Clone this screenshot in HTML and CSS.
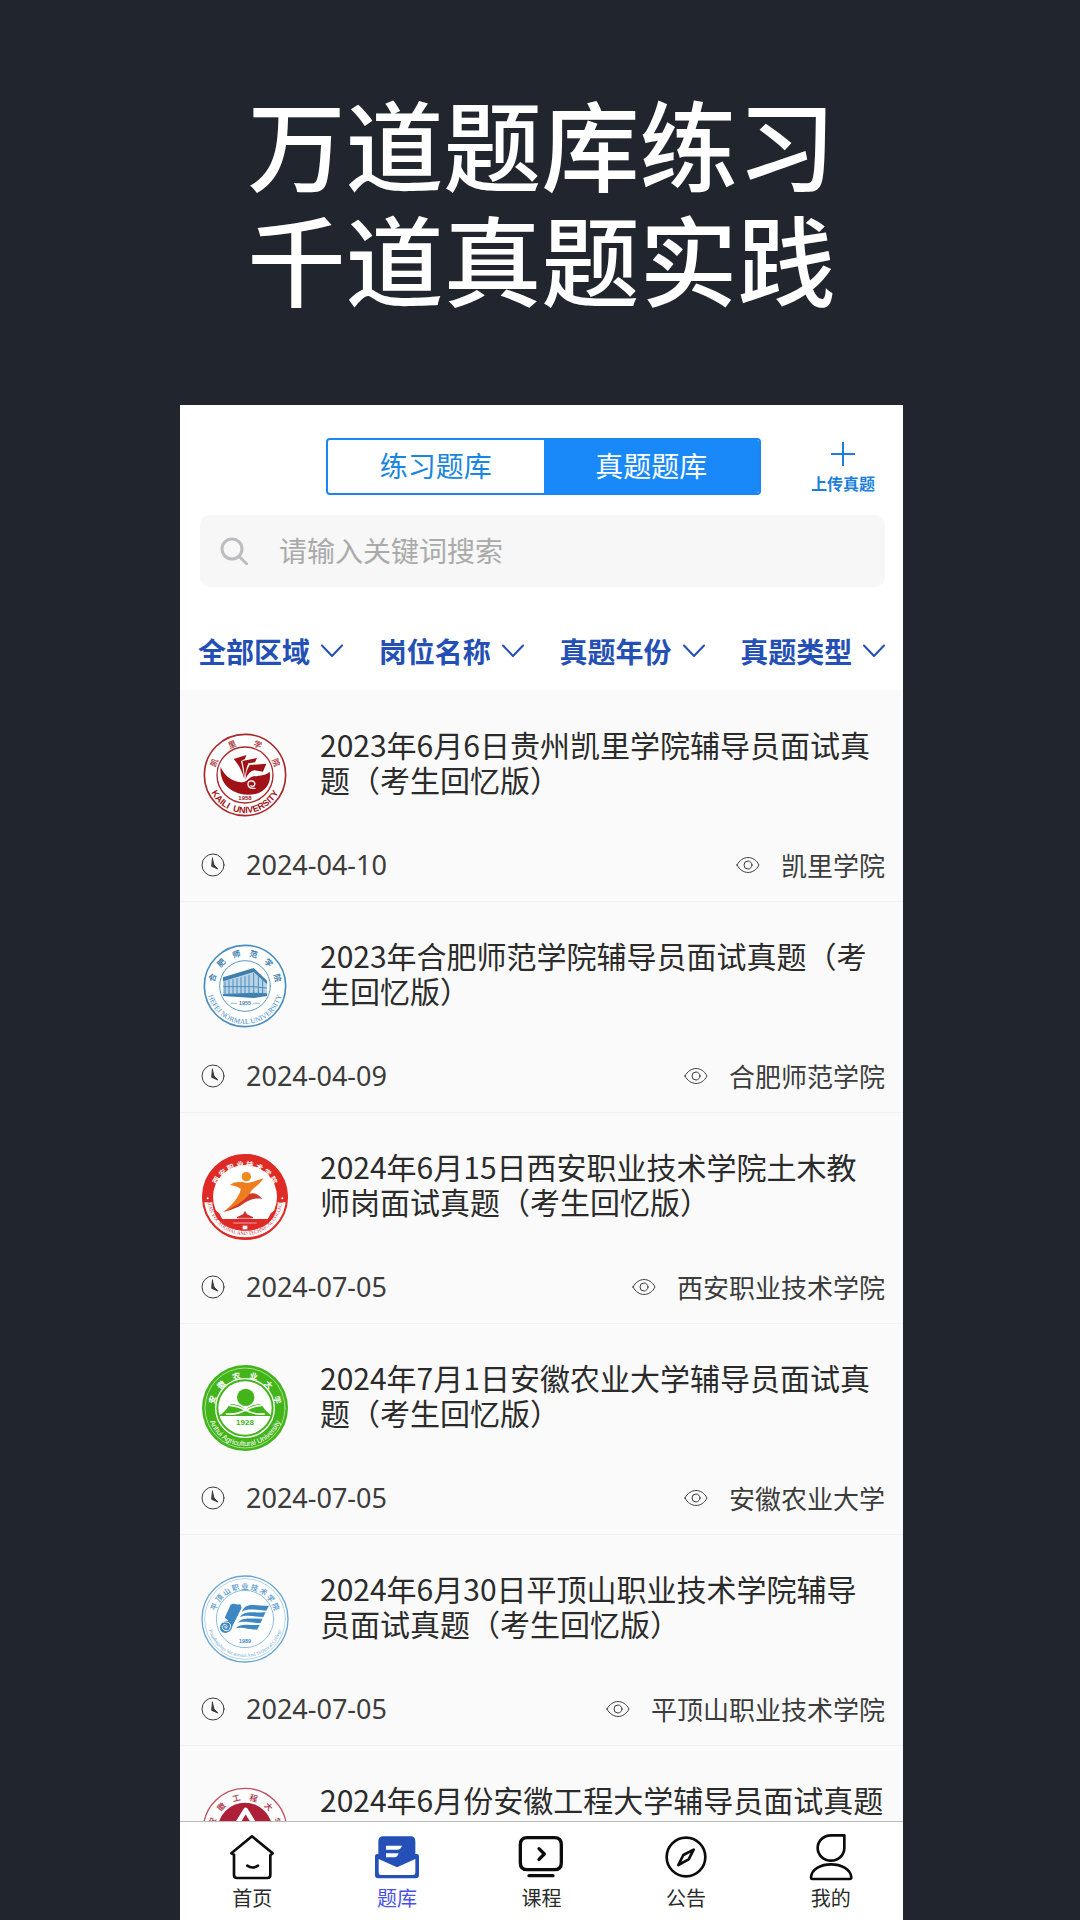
FILE: index.html
```html
<!DOCTYPE html>
<html lang="zh-CN">
<head>
    <meta charset="UTF-8">
    <meta name="viewport" content="width=device-width, initial-scale=1.0">
    <title>真题题库</title>
    <link rel="stylesheet" href="styles.css">
</head>
<body>
    <!-- Shared icons and the arcs the badge lettering runs along -->
    <svg class="defs" aria-hidden="true">
        <defs>
            <path id="arcTop" d="M -89 25 A 92 92 0 1 1 89 25"/>
            <path id="arcBottom" d="M -111 -20 A 113 113 0 1 0 111 -20"/>
            <symbol id="clock" viewBox="0 0 24 24">
                <circle cx="12" cy="12" r="11"/>
                <path d="M11.500 5v8l5 3"/>
                <path class="hand" d="M11.500 6L13 12L16.500 15.500L11 13.500Z"/>
            </symbol>
            <symbol id="eye" viewBox="0 0 24 24">
                <path d="M1 12C6 2 18 2 23 12C18 22 6 22 1 12Z"/>
                <circle cx="12" cy="12" r="4"/>
            </symbol>
            <symbol id="chevron" viewBox="0 0 22 14">
                <path d="M1 1.500L11 12L21 1.500"/>
            </symbol>
        </defs>
    </svg>

    <h1>万道题库练习<br>千道真题实践</h1>

    <main class="phone">
        <header class="top-bar">
            <div class="tabs">
                <button type="button">练习题库</button>
                <button type="button" class="active">真题题库</button>
            </div>
            <button type="button" class="upload">
                <svg viewBox="0 0 24 24"><path d="M12 0v24M0 12h24"/></svg>
                <span>上传真题</span>
            </button>
        </header>

        <label class="search">
            <svg viewBox="0 0 28 28"><circle cx="12" cy="12" r="10"/><path d="M19 19.500L27 27"/></svg>
            <input type="text" placeholder="请输入关键词搜索" aria-label="搜索">
        </label>

        <div class="filters">
            <div class="filter">
                <select aria-label="区域"><option>全部区域</option></select>
                <svg><use href="#chevron"/></svg>
            </div>
            <div class="filter">
                <select aria-label="岗位"><option>岗位名称</option></select>
                <svg><use href="#chevron"/></svg>
            </div>
            <div class="filter">
                <select aria-label="年份"><option>真题年份</option></select>
                <svg><use href="#chevron"/></svg>
            </div>
            <div class="filter">
                <select aria-label="类型"><option>真题类型</option></select>
                <svg><use href="#chevron"/></svg>
            </div>
        </div>

        <ul class="list">
            <li class="item">
                <a href="#" class="item-main">
                    <svg class="logo" viewBox="-132 -132 264 264">
                        <circle r="122" fill="#fff" stroke="#a8282c" stroke-width="5"/>
                        <circle r="84" fill="none" stroke="#a8282c" stroke-width="4"/>
                        <path fill="#a01216" d="M-73 -24C-60 5 -40 18 -12 22C6 24 8 8 26 4C46 2 66 0 74 -10C80 24 62 48 34 56C-8 66 -50 50 -66 18C-72 4 -75 -10 -73 -24Z"/>
                        <path fill="#a01216" d="M-34 -48L4 -60L0 -48L-12 -42C-8 -24 -4 -4 -2 12C-8 -8 -16 -28 -34 -48ZM-8 -42L36 -51L30 -38L10 -35C4 -20 0 -4 0 12C-2 -8 -4 -26 -8 -42ZM14 -30L64 -34L54 -10L28 -14C14 -10 6 0 2 14C2 -4 6 -18 14 -30Z"/>
                        <path fill="none" stroke="#fff" stroke-width="4" d="M30 40C2 42 4 14 22 18C36 22 28 40 18 32"/>
                        <text y="76" class="year" fill="#a01216">1958</text>
                        <text class="brush" fill="#b0484b"><textPath href="#arcTop" startOffset="50%">凯　　里　　学　　院</textPath></text>
                        <text class="latin bold" fill="#a01216"><textPath href="#arcBottom" startOffset="50%">KAILI&#160; UNIVERSITY</textPath></text>
                    </svg>
                    <h2>2023年6月6日贵州凯里学院辅导员面试真题（考生回忆版）</h2>
                </a>
                <div class="meta">
                    <svg><use href="#clock"/></svg><time>2024-04-10</time>
                    <svg class="eye"><use href="#eye"/></svg><span>凯里学院</span>
                </div>
            </li>

            <li class="item">
                <a href="#" class="item-main">
                    <svg class="logo" viewBox="-132 -132 264 264">
                        <circle r="122" fill="#fff" stroke="#4a8dbf" stroke-width="5"/>
                        <circle r="76" fill="none" stroke="#5c99c5" stroke-width="3"/>
                        <path fill="#b9d3e6" d="M-66 -22L26 -52L66 -12V28L26 34L-66 28Z"/>
                        <path fill="#3e7fae" d="M-66 -26L26 -54L66 -16V-6L26 -42L-66 -14ZM-66 24L26 20L66 22V30L26 36L-66 30Z"/>
                        <path fill="none" stroke="#4a8dbf" stroke-width="3" d="M-60 -12V26M-48 -16V26M-36 -19V26M-24 -22V26M-12 -25V26M0 -28V26M12 -32V26M26 -38V30M40 -28V28M53 -18V28M-64 2H26L64 6"/>
                        <path stroke="#5c99c5" stroke-width="2" d="M-42 52H-25M26 52H44"/>
                        <text y="58" class="year small" fill="#3e7fae">1955</text>
                        <text class="brush" fill="#3e7fae"><textPath href="#arcTop" startOffset="50%">合　肥　师　范　学　院</textPath></text>
                        <text class="latin" fill="#4a8dbf"><textPath href="#arcBottom" startOffset="50%">HEFEI NORMAL UNIVERSITY</textPath></text>
                    </svg>
                    <h2>2023年合肥师范学院辅导员面试真题（考生回忆版）</h2>
                </a>
                <div class="meta">
                    <svg><use href="#clock"/></svg><time>2024-04-09</time>
                    <svg class="eye"><use href="#eye"/></svg><span>合肥师范学院</span>
                </div>
            </li>

            <li class="item">
                <a href="#" class="item-main">
                    <svg class="logo" viewBox="-132 -132 264 264">
                        <circle r="128" fill="#df2b25"/>
                        <path fill="#fff" d="M-124 16H-98C-88 130 88 130 98 16H124C110 156 -110 156 -124 16Z"/>
                        <circle r="96" fill="#fff"/>
                        <path fill="#df2b25" d="M-98 16L-90 40L-78 48L-68 66H68L78 48L90 40L98 16C94 78 52 100 0 100C-52 100 -94 78 -98 16Z"/>
                        <path fill="#d22a30" d="M0 42L6 52L24 60V64H18V70H32V78H-32V70H-18V64H-24V60L-6 52Z"/>
                        <path stroke="#f3a09a" stroke-width="3" d="M-20 64H20M-34 78H34"/>
                        <path fill="#fff" d="M-7 86H7V97H-7Z"/>
                        <circle cx="4" cy="-61" r="14" fill="#ef8b1d"/>
                        <path fill="#ef7d20" d="M-45 -36C-28 -50 -8 -44 8 -42C26 -44 40 -52 55 -56C46 -38 28 -30 18 -18C6 14 -22 32 -66 45C-38 24 -20 4 -12 -24C-24 -32 -34 -34 -45 -36Z"/>
                        <path fill="#cf3a28" d="M14 -10C30 -16 44 -4 52 6C34 2 18 6 -2 18C-20 32 -42 40 -66 45C-32 28 -6 16 14 -10Z"/>
                        <circle cx="-112" cy="4" r="3" fill="#fff"/>
                        <circle cx="112" cy="4" r="3" fill="#fff"/>
                        <text class="brush small" fill="#fff"><textPath href="#arcTop" startOffset="50%">西 安 职 业 技 术 学 院</textPath></text>
                        <text class="latin tiny" fill="#c9303a"><textPath href="#arcBottom" startOffset="50%">XI'AN VOCATIONAL AND TECHNICAL COLLEGE</textPath></text>
                        <circle r="126" fill="none" stroke="#df2b25" stroke-width="6"/>
                    </svg>
                    <h2>2024年6月15日西安职业技术学院土木教师岗面试真题（考生回忆版）</h2>
                </a>
                <div class="meta">
                    <svg><use href="#clock"/></svg><time>2024-07-05</time>
                    <svg class="eye"><use href="#eye"/></svg><span>西安职业技术学院</span>
                </div>
            </li>

            <li class="item">
                <a href="#" class="item-main">
                    <svg class="logo" viewBox="-132 -132 264 264">
                        <circle r="129" fill="#43b51b"/>
                        <circle r="120" fill="none" stroke="#d9f2cf" stroke-width="2"/>
                        <circle r="88" fill="#43b51b" stroke="#fff" stroke-width="4"/>
                        <circle r="80" fill="#fff"/>
                        <circle cx="2" cy="-32" r="26" fill="#43b51b"/>
                        <path fill="#43b51b" d="M-80 24C-66 18 -56 6 -48 -8C-40 -16 -8 -8 2 6C12 -8 44 -16 50 -8C60 6 70 18 82 24Z"/>
                        <path fill="none" stroke="#fff" stroke-width="5" d="M-56 18C-34 20 -12 14 2 6C16 14 38 20 58 18M-46 -8C-26 -6 -8 0 2 8C12 0 30 -6 50 -8"/>
                        <text y="50" class="year large" fill="#43b51b">1928</text>
                        <text class="brush" fill="#fff"><textPath href="#arcTop" startOffset="50%">安　徽　农　业　大　学</textPath></text>
                        <text class="latin sans" fill="#fff"><textPath href="#arcBottom" startOffset="50%">Anhui Agricultural University</textPath></text>
                    </svg>
                    <h2>2024年7月1日安徽农业大学辅导员面试真题（考生回忆版）</h2>
                </a>
                <div class="meta">
                    <svg><use href="#clock"/></svg><time>2024-07-05</time>
                    <svg class="eye"><use href="#eye"/></svg><span>安徽农业大学</span>
                </div>
            </li>

            <li class="item">
                <a href="#" class="item-main">
                    <svg class="logo" viewBox="-132 -132 264 264">
                        <circle r="129" fill="#fff" stroke="#6aa5d2" stroke-width="4"/>
                        <circle r="121" fill="none" stroke="#8fbcde" stroke-width="2"/>
                        <circle r="86" fill="none" stroke="#8fbcde" stroke-width="3"/>
                        <path fill="#3d88c3" d="M-43 -43C-32 -50 -28 -42 -14 -44L-10 -34L-38 22C-40 40 -60 48 -72 36C-82 20 -64 2 -50 6C-56 -4 -60 2 -60 -6Z"/>
                        <path fill="none" stroke="#fff" stroke-width="3" d="M-66 10C-48 4 -38 18 -46 30C-54 40 -70 34 -68 22C-64 12 -50 18 -54 26C-58 30 -62 26 -60 22"/>
                        <path fill="#3d88c3" d="M-10 -22C4 -52 24 -40 72 -40L64 -25C38 -26 8 -34 -10 -22ZM-16 -5C0 -28 22 -18 62 -20L55 -6C30 -7 4 -14 -16 -5ZM-22 12C-6 -8 14 0 53 -1L46 13C22 12 -4 4 -22 12ZM-28 28C-12 10 10 20 44 18L36 32C12 32 -10 22 -28 28Z"/>
                        <text y="72" class="year small" fill="#3d88c3">1989</text>
                        <text class="brush small" fill="#6aa5d2"><textPath href="#arcTop" startOffset="50%">平 顶 山 职 业 技 术 学 院</textPath></text>
                        <text class="latin tiny" fill="#6aa5d2"><textPath href="#arcBottom" startOffset="50%">Pingdingshan Vocational And Technical College</textPath></text>
                    </svg>
                    <h2>2024年6月30日平顶山职业技术学院辅导员面试真题（考生回忆版）</h2>
                </a>
                <div class="meta">
                    <svg><use href="#clock"/></svg><time>2024-07-05</time>
                    <svg class="eye"><use href="#eye"/></svg><span>平顶山职业技术学院</span>
                </div>
            </li>

            <li class="item">
                <a href="#" class="item-main">
                    <svg class="logo" viewBox="-132 -132 264 264">
                        <circle r="125" fill="#fff" stroke="#c0515f" stroke-width="4"/>
                        <circle r="82" fill="#ad2038"/>
                        <path fill="none" stroke="#fff" stroke-width="14" d="M-60 40L2 -60L64 40"/>
                        <text class="brush" fill="#b0485a"><textPath href="#arcTop" startOffset="50%">安　徽　工　程　大　学</textPath></text>
                    </svg>
                    <h2>2024年6月份安徽工程大学辅导员面试真题</h2>
                </a>
            </li>
        </ul>

        <nav class="tab-bar">
            <a href="#">
                <svg viewBox="150 195 132 132"><path d="M162 254L154 250L216 199L278 250L271 256V315Q271 324 262 324H171Q162 324 162 315ZM202 287Q217 298 234 287"/></svg>
                首页
            </a>
            <a href="#" class="current">
                <svg viewBox="585 195 132 132">
                    <path class="solid" d="M595 252V214Q595 199 610 199H692Q706 199 706 214V252H710Q717 252 717 259V315Q717 325 707 325H595Q585 325 585 315V259Q585 252 592 252Z"/>
                    <path class="cutout" d="M596 267L651 292L706 267V308Q706 315 699 315H603Q596 315 596 308ZM618 227H666Q662 239 652 239H618ZM618 250H656Q652 262 644 262H618Z"/>
                </svg>
                题库
            </a>
            <a href="#">
                <svg viewBox="1020 195 132 132"><path stroke-width="10" d="M1045 203H1126Q1147 203 1147 224V278Q1147 299 1126 299H1045Q1024 299 1024 278V224Q1024 203 1045 203ZM1050 317H1122M1080 236L1096 252L1080 268"/></svg>
                课程
            </a>
            <a href="#">
                <svg viewBox="368 195 132 132"><circle cx="434" cy="261" r="58"/><path d="M457 239L442 268L411 285L426 255Z"/></svg>
                公告
            </a>
            <a href="#">
                <svg viewBox="802 195 132 132"><path d="M868 196H908V234A40 38 0 1 1 868 196ZM812 327Q808 327 808 322C812 270 924 270 929 322Q929 327 924 327Z"/></svg>
                我的
            </a>
        </nav>
    </main>
</body>
</html>
```
FILE: styles.css
```css
* {
    box-sizing: border-box;
}

body {
    font-family: "Noto Sans CJK SC", sans-serif;
    display: flex;
    flex-direction: column;
    height: 100vh;
    margin: 0;
    padding: 0 177px 0 180px;
    background-color: #21252d;
    color: #2b2b2b;
}

h1 {
    margin: 0;
    padding: 84px 0 91px;
    font-size: 98px;
    line-height: 115px;
    font-weight: 500;
    color: #fff;
    text-align: center;
    white-space: nowrap;
}

button, input, select {
    font-family: inherit;
    margin: 0;
    padding: 0;
    border: none;
    background: none;
}

a {
    color: inherit;
    text-decoration: none;
}

svg {
    fill: none;
    stroke-linecap: round;
    stroke-linejoin: round;
    flex-shrink: 0;
}

.defs {
    position: absolute;
    width: 0;
    height: 0;
}

.phone {
    flex: 1;
    min-height: 0;
    display: flex;
    flex-direction: column;
    background: #fff;
}

/* Top bar */
.top-bar {
    display: flex;
    justify-content: space-between;
    padding: 33px 28px 0 146px;
}

.tabs {
    display: flex;
    width: 435px;
    height: 57px;
    border: 2px solid #1a86ee;
    border-radius: 4px;
    overflow: hidden;
}

.tabs button {
    flex: 1;
    padding-bottom: 4px;
    font-size: 28px;
    line-height: 48px;
    color: #1a86e0;
}

.tabs .active {
    background: #1989fa;
    color: #fff;
}

.upload {
    display: flex;
    flex-direction: column;
    align-items: center;
    padding-top: 4px;
    font-size: 16px;
    line-height: 24px;
    font-weight: bold;
    color: #1a80dc;
}

.upload svg {
    width: 24px;
    height: 24px;
    margin-bottom: 5px;
    stroke: currentColor;
    stroke-width: 2;
}

.search {
    display: flex;
    align-items: center;
    gap: 31px;
    height: 72px;
    margin: 20px 18px 0 20px;
    padding: 0 20px;
    border-radius: 10px;
    background: #f7f7f7;
}

.search svg {
    width: 28px;
    height: 28px;
    stroke: #bdbdc0;
    stroke-width: 3;
}

.search input {
    flex: 1;
    padding-bottom: 2px;
    font-size: 28px;
    line-height: 40px;
    outline: none;
}

.search input::placeholder {
    color: #aaa;
}

/* Filters */
.filters {
    display: grid;
    grid-template-columns: repeat(4, 1fr);
    padding: 44px 0 19px;
}

.filter {
    display: flex;
    align-items: center;
    gap: 10px;
    padding-left: 18px;
    color: #244fb4;
}

.filter select {
    appearance: none;
    font-size: 28px;
    line-height: 40px;
    font-weight: bold;
    color: inherit;
}

.filter svg {
    width: 22px;
    height: 14px;
    stroke: currentColor;
    stroke-width: 2;
}

/* Question list */
.list {
    flex: 1;
    min-height: 0;
    margin: 0;
    padding: 1px 0 0;
    list-style: none;
    overflow: hidden;
    background: #fafafa;
}

.item {
    padding: 36px 18px 18px 21px;
    border-bottom: 1px solid #f2f2f2;
}

.item-main {
    display: flex;
    gap: 31px;
}

.item h2 {
    flex: 1;
    margin: 0;
    font-size: 30px;
    line-height: 35px;
    font-weight: normal;
}

.logo {
    width: 88px;
    height: 88px;
    margin-top: 4px;
}

.logo text {
    text-anchor: middle;
}

.brush {
    font-family: "Noto Sans CJK SC", sans-serif;
    font-size: 24px;
    font-weight: bold;
}

.brush.small {
    font-size: 22px;
}

.latin {
    font-family: "Liberation Serif", serif;
    font-size: 22px;
}

.latin.bold {
    font-family: "Liberation Sans", sans-serif;
    font-size: 27px;
    font-weight: bold;
}

.latin.sans {
    font-family: "Liberation Sans", sans-serif;
}

.latin.tiny {
    font-size: 15px;
}

.year {
    font-family: "Liberation Sans", sans-serif;
    font-size: 18px;
    font-weight: bold;
}

.year.small {
    font-size: 16px;
}

.year.large {
    font-size: 24px;
}

.meta {
    display: flex;
    align-items: center;
    margin-top: 28px;
    font-size: 26px;
    line-height: 36px;
    color: #3c3c3c;
}

.meta svg {
    width: 24px;
    height: 24px;
    stroke: currentColor;
    stroke-width: 1;
}

.hand {
    fill: currentColor;
}

.meta time {
    margin-left: 21px;
    font-family: "Noto Sans", sans-serif;
    font-size: 27px;
}

.meta .eye {
    margin-left: auto;
    margin-right: 21px;
}

/* Bottom navigation */
.tab-bar {
    display: grid;
    grid-template-columns: repeat(5, 1fr);
    height: 99px;
    border-top: 1px solid #bcbcbc;
}

.tab-bar a {
    display: flex;
    flex-direction: column;
    align-items: center;
    gap: 5px;
    padding-top: 13px;
    font-size: 20px;
    line-height: 28px;
}

.tab-bar svg {
    width: 44px;
    height: 44px;
    overflow: visible;
    stroke: #0c0c0c;
    stroke-width: 8;
}

.tab-bar .current {
    color: #4a50e8;
}

.tab-bar .solid {
    fill: #2450b8;
    stroke: none;
}

.tab-bar .cutout {
    fill: #fff;
    stroke: none;
}
```
